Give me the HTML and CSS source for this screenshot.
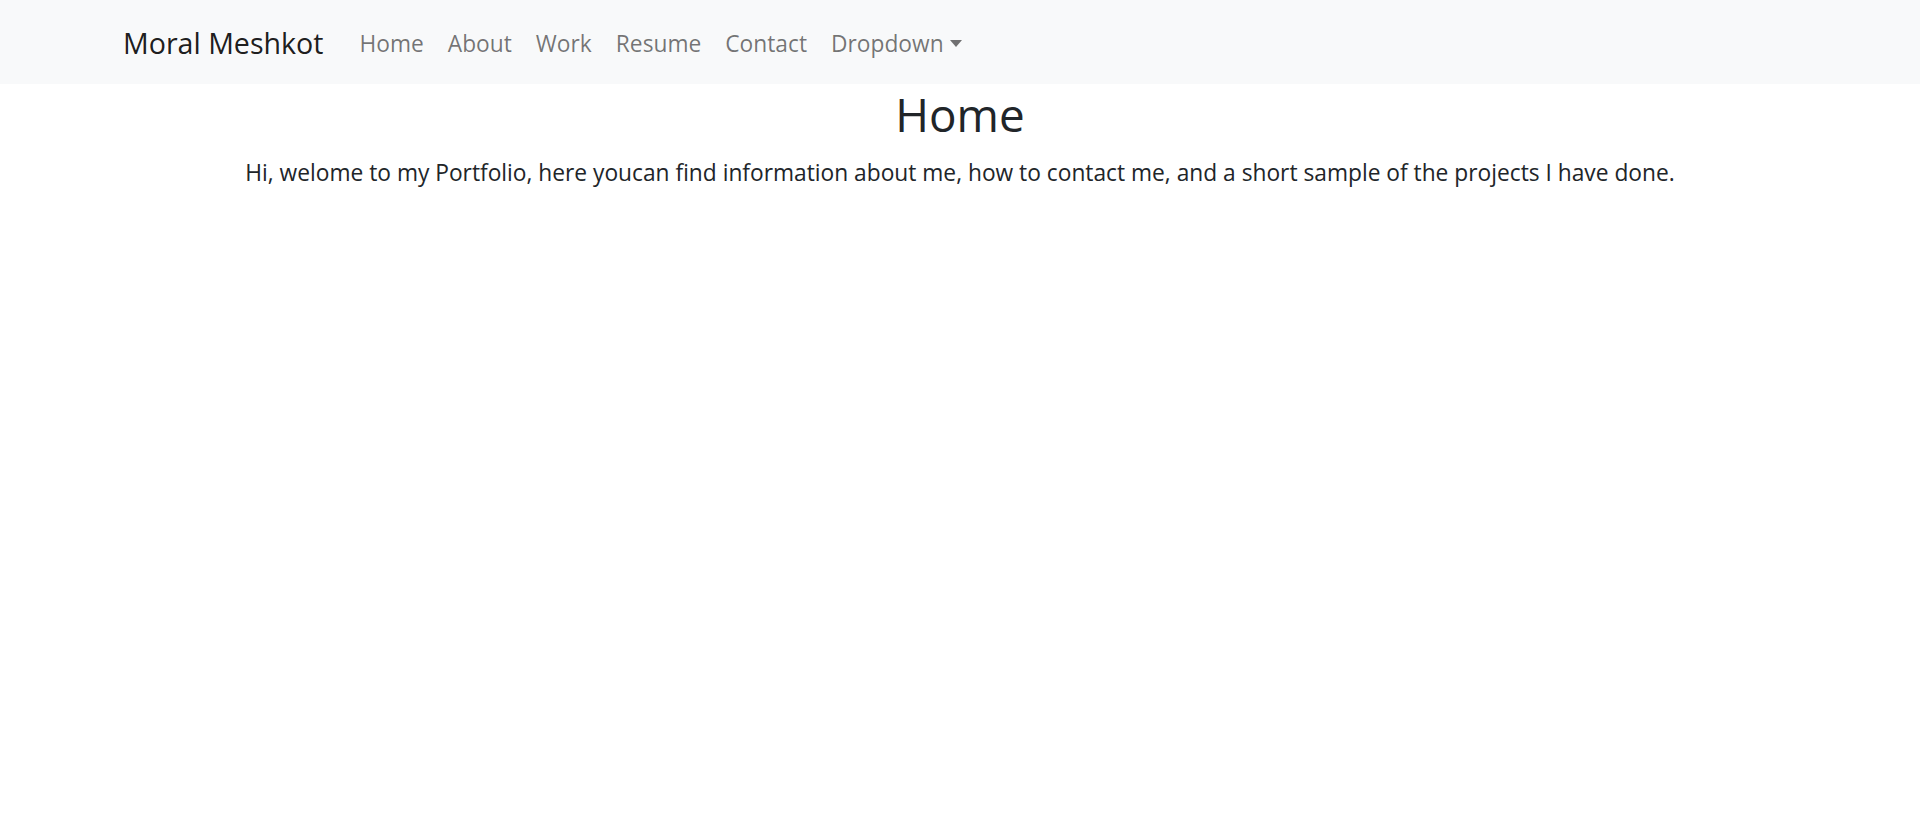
FILE: index.html
```html
<!DOCTYPE html>
<html lang="en">
<head>
<meta charset="utf-8">
<title>Moral Meshkot</title>
<link rel="stylesheet" href="styles.css">
</head>
<body>
<nav class="navbar">
  <div class="container nav-inner">
    <a class="brand" href="#">Moral Meshkot</a>
    <ul class="nav-list">
      <li><a class="nav-link" href="#">Home</a></li>
      <li><a class="nav-link" href="#">About</a></li>
      <li><a class="nav-link" href="#">Work</a></li>
      <li><a class="nav-link" href="#">Resume</a></li>
      <li><a class="nav-link" href="#">Contact</a></li>
      <li><a class="nav-link dropdown-toggle" href="#">Dropdown</a></li>
    </ul>
  </div>
</nav>
<main class="content">
  <h1 class="title">Home</h1>
  <p class="lead-text">Hi, welome to my Portfolio, here youcan find information about me, how to contact me, and a short sample of the projects I have done.</p>
</main>
</body>
</html>
```
FILE: styles.css
```css
* { box-sizing: border-box; }
html, body { margin: 0; padding: 0; }
body {
  font-family: "Open Sans", "Noto Sans", "Liberation Sans", sans-serif;
  font-size: 22.75px;
  line-height: 36px;
  color: #212529;
  background: #fff;
}
.navbar {
  background: #f8f9fa;
  padding: 12px 0;
}
.container {
  max-width: 1710px;
  margin: 0 auto;
  padding: 0 18px;
}
.nav-inner {
  display: flex;
  align-items: center;
}
.brand {
  font-size: 28.6px;
  line-height: 45px;
  padding: 8px 0 7px;
  margin-right: 24px;
  color: rgba(0,0,0,.9);
  text-decoration: none;
}
.nav-list {
  display: flex;
  list-style: none;
  margin: 0;
  padding: 0;
}
.nav-link {
  display: block;
  padding: 14px 12px 10px;
  line-height: 36px;
  color: rgba(0,0,0,.55);
  text-decoration: none;
}
.dropdown-toggle::after {
  content: "";
  display: inline-block;
  margin-left: 6px;
  vertical-align: 5px;
  border-top: 7px solid;
  border-left: 6.5px solid transparent;
  border-right: 6.5px solid transparent;
}
.content {
  text-align: center;
}
.title {
  font-size: 45.8px;
  font-weight: 400;
  line-height: 57.6px;
  margin: 2px 0 11px;
}
.lead-text {
  margin: 0;
}
```
